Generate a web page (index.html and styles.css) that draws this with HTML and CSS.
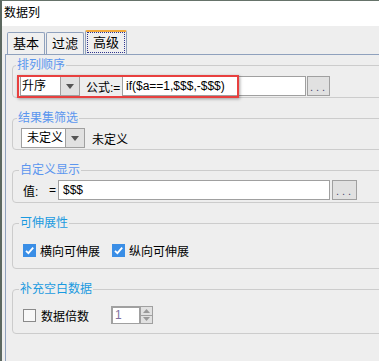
FILE: index.html
```html
<!DOCTYPE html>
<html lang="zh">
<head>
  <meta charset="UTF-8">
  <title>数据列</title>
  <link rel="stylesheet" href="styles.css">
</head>
<body>

<div class="window">
  <div class="titlebar">数据列</div>

  <div class="tabs">
    <div class="tab">基本</div>
    <div class="tab">过滤</div>
    <div class="tab active"><span class="focus">高级</span></div>
  </div>

  <div class="panel">

    <fieldset class="group g-sort">
      <legend>排列顺序</legend>
      <div class="row">
        <div class="combo combo-sort">
          <span class="combo-text">升序</span>
          <span class="combo-btn"><svg width="8" height="5" viewBox="0 0 8 5"><path d="M0 0H8L4 5Z" fill="#555"/></svg></span>
        </div>
        <span class="lbl-formula">公式:=</span>
        <div class="field field-formula">if($a==1,$$$,-$$$)</div>
        <div class="dots-btn">...</div>
        <div class="highlight"></div>
      </div>
    </fieldset>

    <fieldset class="group g-filter">
      <legend>结果集筛选</legend>
      <div class="row">
        <div class="combo combo-filter">
          <span class="combo-text">未定义</span>
          <span class="combo-btn"><svg width="8" height="5" viewBox="0 0 8 5"><path d="M0 0H8L4 5Z" fill="#555"/></svg></span>
        </div>
        <span class="lbl-filter">未定义</span>
      </div>
    </fieldset>

    <fieldset class="group g-display">
      <legend>自定义显示</legend>
      <div class="row">
        <span class="lbl-value">值:</span>
        <span class="lbl-eq">=</span>
        <div class="field field-value">$$$</div>
        <div class="dots-btn wide">...</div>
      </div>
    </fieldset>

    <fieldset class="group g-stretch alt">
      <legend>可伸展性</legend>
      <div class="row">
        <label class="check">
          <svg class="box" width="13" height="13" viewBox="0 0 13 13"><rect width="13" height="13" fill="#3a8ee6"/><path d="M3 6.8L5.4 9.2L10.2 3.6" fill="none" stroke="#fff" stroke-width="1.8"/></svg>
          横向可伸展
        </label>
        <label class="check">
          <svg class="box" width="13" height="13" viewBox="0 0 13 13"><rect width="13" height="13" fill="#3a8ee6"/><path d="M3 6.8L5.4 9.2L10.2 3.6" fill="none" stroke="#fff" stroke-width="1.8"/></svg>
          纵向可伸展
        </label>
      </div>
    </fieldset>

    <fieldset class="group g-fill alt">
      <legend>补充空白数据</legend>
      <div class="row">
        <label class="check">
          <span class="box empty"></span>
          数据倍数
        </label>
        <div class="spinner">
          <span class="spin-value">1</span>
          <span class="spin-btns">
            <span class="spin-up"><svg width="7" height="4" viewBox="0 0 7 4"><path d="M0 4H7L3.5 0Z" fill="#9a9a9a"/></svg></span>
            <span class="spin-down"><svg width="7" height="4" viewBox="0 0 7 4"><path d="M0 0H7L3.5 4Z" fill="#9a9a9a"/></svg></span>
          </span>
        </div>
      </div>
    </fieldset>

  </div>
</div>

</body>
</html>
```

FILE: styles.css
```css
body {
  margin: 0;
  background: #eeeeee;
}

.window {
  width: 379px;
  height: 361px;
  box-sizing: border-box;
  border-top: 1px solid #66736a;
  border-left: 2px solid #5c6860;
  background: #eeeeee;
  overflow: hidden;
  font-family: "Liberation Sans", "Noto Sans CJK SC", sans-serif;
  font-size: 12px;
  color: #000;
}

.titlebar {
  height: 25px;
  line-height: 25px;
  background: #fff;
  padding-left: 2px;
}

/* tabs */
.tabs {
  display: flex;
  align-items: flex-end;
  height: 28px;
  padding-left: 5px;
}

.tab {
  height: 21px;
  line-height: 21px;
  border: 1px solid #8fa1bd;
  border-bottom: none;
  border-radius: 2px 2px 0 0;
  padding: 0 5px;
  margin-right: 1px;
  font-size: 13px;
  background: #f0f0f0;
}

.tab.active {
  height: 22px;
  border-top: 2px solid #f2a93b;
  padding: 0 1px;
  background: #efefef;
}

.focus {
  display: block;
  height: 19px;
  line-height: 19px;
  padding: 0 5px;
  border: 1px dotted #2f3590;
}

.panel {
  margin-left: 3px;
  height: 320px;
  border-top: 1px solid #8fa1bd;
  border-left: 1px solid #8fa1bd;
  padding: 3px 0 0 6px;
}

/* groups */
.group {
  width: 400px;
  box-sizing: border-box;
  min-width: 0;
  margin: 0 0 13px;
  border: 1px solid #cccccc;
  border-radius: 4px;
  padding: 4px 0 1px 7px;
}

.group legend {
  font-size: 12px;
  line-height: 14px;
  padding: 0 1px;
  margin-left: -4px;
  color: #5b96ee;
}

.group.alt legend {
  color: #1a9ae0;
}

.g-filter { padding: 3px 0 1px 8px; }
.g-display { padding: 3px 0 2px 10px; }
.g-stretch { padding: 10px 0 8px 10px; }
.g-fill { padding: 9px 0 8px 10px; }

.row {
  position: relative;
  display: flex;
  align-items: center;
  height: 20px;
}

/* combo box */
.combo {
  display: flex;
  height: 20px;
  box-sizing: border-box;
  border: 1px solid #a0a0a0;
  background: #fff;
}

.combo-text {
  flex: 1;
  line-height: 18px;
  padding-left: 1px;
}

.combo-btn {
  width: 18px;
  display: flex;
  align-items: center;
  justify-content: center;
  background: #e1e1e1;
  border-left: 1px solid #a0a0a0;
}

.combo-sort { width: 60px; }
.combo-filter { width: 64px; }
.combo-filter .combo-text { padding-left: 5px; }

.lbl-formula {
  width: 36px;
  margin-left: 6px;
}

.lbl-filter {
  margin-left: 7px;
}

.lbl-value {
  width: 26px;
}

.lbl-eq {
  width: 9px;
}

.field {
  height: 20px;
  box-sizing: border-box;
  border: 1px solid #a0a0a0;
  background: #fff;
  line-height: 18px;
  padding-left: 3px;
}

.field-formula { width: 184px; }
.field-value { width: 272px; padding-left: 4px; }

.dots-btn {
  width: 23px;
  height: 20px;
  box-sizing: border-box;
  margin-left: 1px;
  border: 1px solid #a0a0a0;
  background: #e1e1e1;
  color: #4a4870;
  font-size: 11px;
  line-height: 20px;
  letter-spacing: 3px;
  padding-left: 2px;
}

.dots-btn.wide {
  width: 25px;
  margin-left: 2px;
  padding-left: 3px;
}

.highlight {
  position: absolute;
  left: -3px;
  top: -1px;
  width: 222px;
  height: 23px;
  box-sizing: border-box;
  border: 2px solid #e8403f;
  box-shadow: 1px 1px 3px rgba(0, 0, 0, 0.35);
}

/* checkboxes */
.check {
  display: flex;
  align-items: center;
  margin-right: 12px;
}

.check .box {
  margin-right: 4px;
}

.box.empty {
  width: 11px;
  height: 11px;
  border: 1px solid #8a8a8a;
  background: #f8f8f8;
  margin-right: 5px;
}

.g-fill .check {
  margin-right: 22px;
}

/* spinner */
.spinner {
  display: flex;
  height: 18px;
}

.spin-value {
  width: 29px;
  box-sizing: border-box;
  border: 1px solid #a0a0a0;
  border-width: 2px 1px 1px 2px;
  background: #fff;
  color: #8070a0;
  line-height: 15px;
  padding-left: 2px;
}

.spin-btns {
  display: flex;
  flex-direction: column;
  width: 13px;
}

.spin-up,
.spin-down {
  flex: 1;
  display: flex;
  align-items: center;
  justify-content: center;
  border: 1px solid #a0a0a0;
  background: #e1e1e1;
}

.spin-down {
  border-top: none;
}
```
